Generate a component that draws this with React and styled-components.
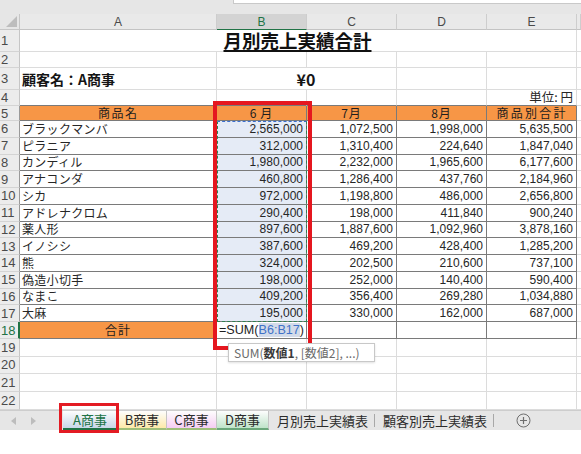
import React from 'react';
import styled, { createGlobalStyle } from 'styled-components';

const GlobalStyle = createGlobalStyle`
  html, body { margin: 0; padding: 0; background: #fff; }
  body {
    width: 581px; height: 454px; overflow: hidden;
    font-family: "Noto Sans CJK JP", "Liberation Sans", sans-serif;
    color: #262626;
  }
  * { box-sizing: border-box; }
`;

const GRID = '#dcdcdc';
const DARK = '#7a7a7a';
const ORANGE = '#f79646';
const GREEN = '#217346';
const FILL = '#e5ebf6';

const Page = styled.div`
  width: 581px;
  height: 454px;
  display: flex;
  flex-direction: column;
  background: #fff;
`;

const TopBar = styled.div`
  height: 14px;
  flex: none;
  background: #e6e6e6;
  display: flex;
  justify-content: flex-end;
  align-items: flex-start;
`;

const FormulaEdge = styled.div`
  width: 348px;
  height: 4px;
  background: #fff;
  border-left: 1px solid #c9c9c9;
  border-bottom: 1px solid #c9c9c9;
`;

const Sheet = styled.div`
  position: relative;
  flex: none;
  height: 396px;
  overflow: hidden;
  display: grid;
  grid-template-columns: 20px 197px 90px 90px 90px 90px 4px;
  grid-template-rows: 16px 22px 16px 22px 16px 15px repeat(12, 16.75px) 17px 17.5px 17.5px 17.5px 18.5px;
`;

const Corner = styled.div`
  position: relative;
  background: #e6e6e6;
  border-right: 1px solid #c6c6c6;
  border-bottom: 1px solid #c6c6c6;
  &::after {
    content: '';
    position: absolute;
    right: 2px;
    bottom: 2px;
    width: 11px;
    height: 11px;
    background: #bdbdbd;
    clip-path: polygon(100% 0, 100% 100%, 0 100%);
  }
`;

const ColHead = styled.div`
  display: flex;
  align-items: center;
  justify-content: center;
  background: ${p => (p.$active ? '#d3d3d3' : '#e9e9e9')};
  color: ${p => (p.$active ? GREEN : '#4a4a4a')};
  border-right: 1px solid #cdcdcd;
  border-bottom: 1px solid ${p => (p.$active ? GREEN : '#c3c3c3')};
  font-family: "Liberation Sans", Arial, sans-serif;
  font-size: 12px;
`;

const RowHead = styled.div`
  display: flex;
  align-items: center;
  padding-left: 1px;
  background: #ececec;
  color: ${p => (p.$tone === 'active' ? GREEN : '#4a4a4a')};
  border-bottom: 1px solid #d4d4d4;
  border-right: ${p =>
    p.$tone === 'active' ? `2px solid ${GREEN}` : p.$tone === 'dark' ? `1px solid #9a9a9a` : '1px solid #c6c6c6'};
  font-family: "Liberation Sans", Arial, sans-serif;
  font-size: 13px;
  line-height: 1;
`;

const Cell = styled.div`
  grid-column: span ${p => p.$span || 1};
  display: flex;
  align-items: center;
  justify-content: ${p => (p.$align === 'center' ? 'center' : p.$align === 'right' ? 'flex-end' : 'flex-start')};
  padding: 0 3px 0 2px;
  min-width: 0;
  white-space: nowrap;
  line-height: 1;
  background: ${p => p.$bg || '#fff'};
  border-right: 1px solid ${p => p.$br || GRID};
  border-bottom: 1px solid ${p => p.$bb || GRID};
`;

const Title = styled.span`
  font-size: 18.5px;
  font-weight: 700;
  text-decoration: underline;
  text-underline-offset: 2px;
  text-decoration-thickness: 1.5px;
  color: #111;
`;

const Customer = styled.span`
  font-size: 14px;
  font-weight: 700;
  color: #151515;
`;

const Amount = styled.span`
  font-size: 16px;
  font-weight: 700;
  color: #151515;
`;

const UnitNote = styled.span`
  font-size: 12.5px;
  line-height: 1;
  color: #262626;
`;

const HeadText = styled.span`
  font-size: 12px;
  color: #1e1e1e;
  letter-spacing: ${p => p.$ls}px;
  margin-right: -${p => p.$ls}px;
`;

const NameText = styled.span`
  font-size: 12px;
  letter-spacing: 0.3px;
  color: #262626;
`;

const Num = styled.span`
  font-family: "Liberation Sans", Arial, sans-serif;
  font-size: 12px;
  color: #262626;
`;

const Formula = styled.span`
  font-family: "Liberation Sans", Arial, sans-serif;
  font-size: 12.6px;
  color: #1e1e1e;
`;

const RangeRef = styled.span`
  color: #3f72c8;
  background: #d3dbe9;
`;

const RedFrame = styled.div`
  position: absolute;
  left: 213px;
  top: 87px;
  width: 99px;
  height: 249px;
  border: 4px solid #e5171f;
  pointer-events: none;
`;

const Ants = styled.div`
  position: absolute;
  left: 217px;
  top: 107px;
  width: 90px;
  height: 201px;
  border: 1px dashed #2e8050;
  border-top-color: #3b6fd0;
  pointer-events: none;
`;

const Tooltip = styled.div`
  position: absolute;
  left: 228px;
  top: 329px;
  width: 147px;
  height: 19px;
  display: flex;
  align-items: center;
  padding-left: 5px;
  background: #fff;
  border: 1px solid #c8c8c8;
  box-shadow: 0 1px 2px rgba(0, 0, 0, 0.12);
  font-size: 12px;
  color: #6a6a6a;
  white-space: nowrap;
  z-index: 2;
`;

const Strong = styled.b`
  color: #3a3a3a;
  font-weight: 700;
`;

const TabBar = styled.div`
  position: relative;
  z-index: 3;
  height: 20px;
  flex: none;
  display: flex;
  align-items: stretch;
  background: #e6e6e6;
  border-top: 1px solid #cdcdcd;
  font-size: 13px;
`;

const NavArrows = styled.div`
  width: 63px;
  flex: none;
  display: flex;
  align-items: center;
  gap: 15px;
  padding-left: 11px;
`;

const Tab = styled.div`
  width: ${p => p.$w}px;
  flex: none;
  display: flex;
  align-items: center;
  justify-content: center;
  color: ${p => (p.$active ? GREEN : '#2b2b2b')};
  background: linear-gradient(to bottom, #fdfdfd 0%, ${p => p.$tint} 100%);
  border-right: 1px solid #c4c4c4;
  border-bottom: 2px solid ${p => p.$line};
`;

const PlainTab = styled.div`
  display: flex;
  align-items: center;
  padding: 0 6px 0 8px;
  color: #2b2b2b;
`;

const TabSep = styled.div`
  width: 1px;
  margin: 3px 0;
  background: #a8a8a8;
`;

const AddButton = styled.div`
  display: flex;
  align-items: center;
  margin-left: 22px;
`;

const TabFrame = styled.div`
  position: absolute;
  left: 59px;
  top: -8px;
  width: 60px;
  height: 30px;
  border: 3px solid #e31b23;
  pointer-events: none;
`;

const Rest = styled.div`
  flex: 1;
  background: #fff;
`;

const rows = [
  ['ブラックマンバ', '2,565,000', '1,072,500', '1,998,000', '5,635,500'],
  ['ピラニア', '312,000', '1,310,400', '224,640', '1,847,040'],
  ['カンディル', '1,980,000', '2,232,000', '1,965,600', '6,177,600'],
  ['アナコンダ', '460,800', '1,286,400', '437,760', '2,184,960'],
  ['シカ', '972,000', '1,198,800', '486,000', '2,656,800'],
  ['アドレナクロム', '290,400', '198,000', '411,840', '900,240'],
  ['薬人形', '897,600', '1,887,600', '1,092,960', '3,878,160'],
  ['イノシシ', '387,600', '469,200', '428,400', '1,285,200'],
  ['熊', '324,000', '202,500', '210,600', '737,100'],
  ['偽造小切手', '198,000', '252,000', '140,400', '590,400'],
  ['なまこ', '409,200', '356,400', '269,280', '1,034,880'],
  ['大麻', '195,000', '330,000', '162,000', '687,000'],
];

const heads = [
  ['商品名', 1.5],
  ['6 月', 0.5],
  ['7月', 1],
  ['8月', 1],
  ['商品別合計', 2.25],
];

const Arrow = ({ dir }) => (
  <svg width="5" height="8" viewBox="0 0 5 8">
    <path d={dir === 'l' ? 'M5 0 L0 4 L5 8 Z' : 'M0 0 L5 4 L0 8 Z'} fill="#bdbdbd" />
  </svg>
);

const PlusCircle = () => (
  <svg width="15" height="15" viewBox="0 0 15 15">
    <circle cx="7.5" cy="7.5" r="6.5" fill="none" stroke="#6e6e6e" strokeWidth="1" />
    <path d="M7.5 4 V11 M4 7.5 H11" stroke="#6e6e6e" strokeWidth="1.2" />
  </svg>
);

const EmptyRow = ({ n }) => (
  <>
    <RowHead>{n}</RowHead>
    {[0, 1, 2, 3, 4, 5].map(i => (
      <Cell key={i} />
    ))}
  </>
);

export default function App() {
  return (
    <>
      <GlobalStyle />
      <Page>
        <TopBar>
          <FormulaEdge />
        </TopBar>
        <Sheet>
          <Corner />
          {['A', 'B', 'C', 'D', 'E', ''].map((l, i) => (
            <ColHead key={i} $active={l === 'B'}>
              {l}
            </ColHead>
          ))}

          <RowHead>1</RowHead>
          <Cell $span={5} $align="center">
            <Title>月別売上実績合計</Title>
          </Cell>
          <Cell />

          <EmptyRow n={2} />

          <RowHead>3</RowHead>
          <Cell>
            <Customer>顧客名：A商事</Customer>
          </Cell>
          <Cell $span={2} $align="center">
            <Amount>¥0</Amount>
          </Cell>
          <Cell />
          <Cell />
          <Cell />

          <RowHead>4</RowHead>
          <Cell $bb={DARK} />
          <Cell $bb={DARK} />
          <Cell $bb={DARK} />
          <Cell $bb={DARK} />
          <Cell $bb={DARK} $align="right">
            <UnitNote>単位: 円</UnitNote>
          </Cell>
          <Cell />

          <RowHead $tone="dark">5</RowHead>
          {heads.map(([t, ls]) => (
            <Cell key={t} $bg={ORANGE} $bb={DARK} $br={DARK} $align="center">
              <HeadText $ls={ls}>{t}</HeadText>
            </Cell>
          ))}
          <Cell />

          {rows.map((r, ri) => (
            <React.Fragment key={r[0]}>
              <RowHead $tone="dark">{ri + 6}</RowHead>
              <Cell $bb={DARK} $br={DARK}>
                <NameText>{r[0]}</NameText>
              </Cell>
              {r.slice(1).map((v, ci) => (
                <Cell key={ci} $bb={DARK} $br={DARK} $align="right" $bg={ci === 0 ? FILL : undefined}>
                  <Num>{v}</Num>
                </Cell>
              ))}
              <Cell />
            </React.Fragment>
          ))}

          <RowHead $tone="active">18</RowHead>
          <Cell $bg={ORANGE} $bb={DARK} $br={DARK} $align="center">
            <HeadText $ls={1}>合計</HeadText>
          </Cell>
          <Cell $bb={DARK} $br={DARK}>
            <Formula>
              =SUM(<RangeRef>B6:B17</RangeRef>)
            </Formula>
          </Cell>
          <Cell $bb={DARK} $br={DARK} />
          <Cell $bb={DARK} $br={DARK} />
          <Cell $bb={DARK} $br={DARK} />
          <Cell />

          <EmptyRow n={19} />
          <EmptyRow n={20} />
          <EmptyRow n={21} />
          <EmptyRow n={22} />

          <Ants />
          <RedFrame />
          <Tooltip>
            SUM(<Strong>数値1</Strong>, [数値2], ...)
          </Tooltip>
        </Sheet>

        <TabBar>
          <NavArrows>
            <Arrow dir="l" />
            <Arrow dir="r" />
          </NavArrows>
          <Tab $w={55} $active $tint="#c8d6e8" $line={GREEN}>
            A商事
          </Tab>
          <Tab $w={49} $tint="#fde9a9" $line="#9fbf7a">
            B商事
          </Tab>
          <Tab $w={50} $tint="#f6cdf3" $line="#9fbf7a">
            C商事
          </Tab>
          <Tab $w={52} $tint="#bfe3c9" $line="#6aa77a">
            D商事
          </Tab>
          <PlainTab>月別売上実績表</PlainTab>
          <TabSep />
          <PlainTab>顧客別売上実績表</PlainTab>
          <TabSep />
          <AddButton>
            <PlusCircle />
          </AddButton>
          <TabFrame />
        </TabBar>
        <Rest />
      </Page>
    </>
  );
}
